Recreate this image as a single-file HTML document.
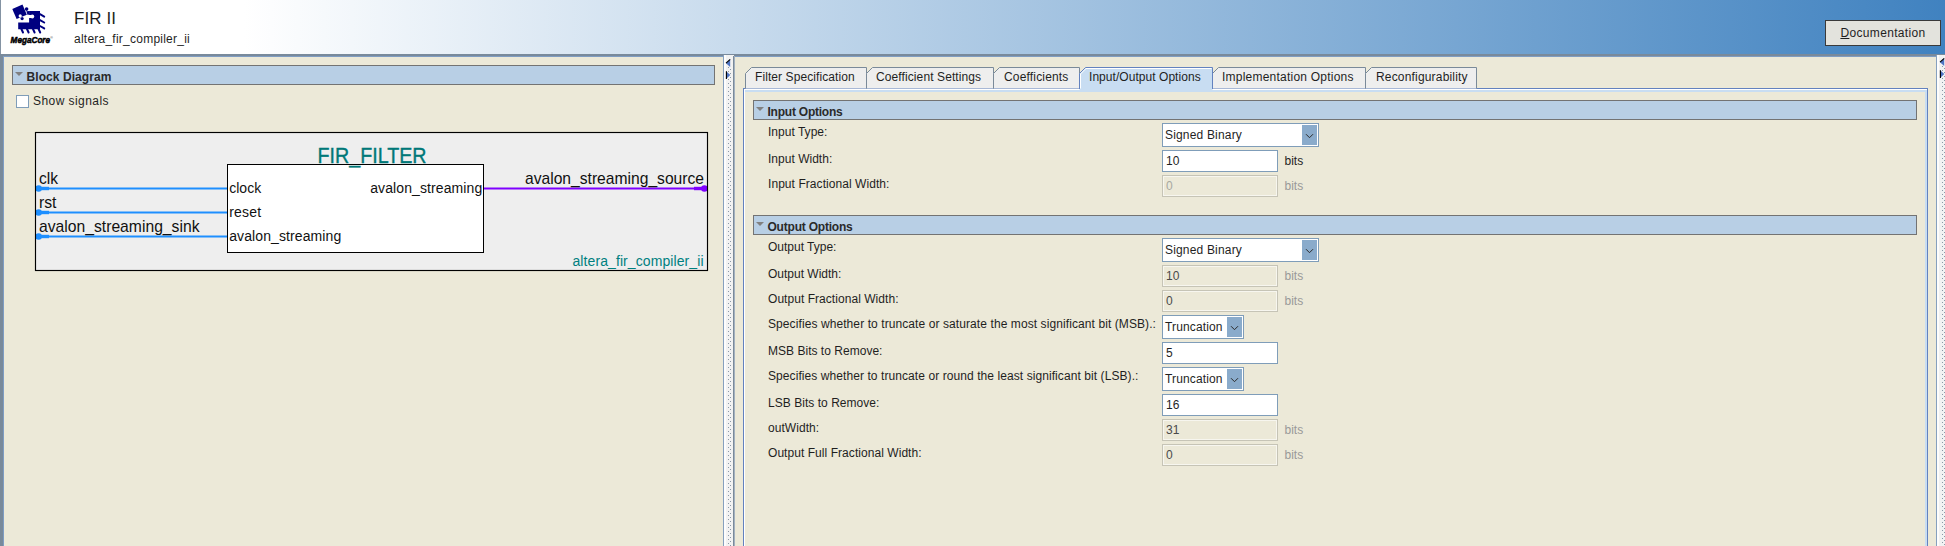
<!DOCTYPE html>
<html><head><meta charset="utf-8"><title>FIR II</title>
<style>
html,body{margin:0;padding:0;}
body{width:1945px;height:546px;overflow:hidden;position:relative;background:#ECE9D8;font-family:"Liberation Sans",sans-serif;font-size:12px;color:#1f1f1f;}
.abs{position:absolute;}
#hdr{left:0;top:0;width:1945px;height:54px;background:linear-gradient(to right,#ffffff 0px,#ffffff 244px,#4082c0 1945px);}
.t{position:absolute;white-space:nowrap;line-height:1;}
.bar{position:absolute;background:#b8cfe5;border:1px solid #737373;box-sizing:border-box;height:20px}
.bar b{position:absolute;left:13.5px;top:5px;font-size:12px;line-height:12px;white-space:nowrap;color:#2a2a2a}
.tri{position:absolute;left:1.5px;top:6px;width:0;height:0;border-left:4px solid transparent;border-right:4px solid transparent;border-top:4px solid #808080;}
.lbl{position:absolute;left:768px;white-space:nowrap;font-size:12px;line-height:14px;}
.tb{position:absolute;left:1162px;width:116px;height:22px;box-sizing:border-box;border:1px solid #7f9db9;background:#fff;font-size:12px;line-height:20px;padding-left:3px;white-space:nowrap}
.tb.dis{border-color:#c6c4b6;background:#ece9d8;color:#4a4a4a;box-shadow:inset 0 0 0 1px #f7f6ef;}
.bits{position:absolute;left:1284.5px;font-size:12px;line-height:14px;}
.bits.dis{color:#999}
.cb{position:absolute;left:1162px;height:24px;box-sizing:border-box;border:1px solid #7f9db9;background:#fff;font-size:12px;line-height:23px;padding-left:2px;white-space:nowrap}
.cb i{position:absolute;right:1px;top:1px;width:15px;height:20px;background:#8aabcb;}
.cb i svg{position:absolute;left:0;top:0}
.doc::first-letter{text-decoration:underline}
.tab{position:absolute;top:67px;height:21px;font-size:12px;line-height:20px;white-space:nowrap}
</style></head><body>
<div id="hdr" class="abs"></div>
<div class="abs" style="left:0;top:54px;width:1945px;height:3px;background:#798a9b"></div>
<div class="abs" style="left:0;top:0;width:1px;height:54px;background:#8493a3"></div>
<div class="abs" style="left:0;top:54px;width:4px;height:492px;background:#798a9b"></div>
<div class="abs" style="left:3px;top:56px;width:1px;height:490px;background:#7f9dc3"></div>
<div class="abs" style="left:3px;top:56px;width:720px;height:1px;background:#7f9dc3"></div>
<div class="abs" style="left:735px;top:56px;width:1201px;height:1px;background:#7f9dc3"></div>
<svg class="abs" style="left:0;top:0" width="64" height="52" viewBox="0 0 64 52">
 <g fill="#000080">
  <polygon points="12.3,8.9 22.5,4.6 26.8,14.8 16.6,19.1"/>
  <circle cx="26.6" cy="9.1" r="1.8"/>
  <circle cx="22.1" cy="18.6" r="1.6"/>
  <path d="M29.1 10.9 H40 V29.2 H18.2 V22.4 H29.1 Z"/>
  <polygon points="26.3,11.2 29.2,10.9 29.2,14.6 27.6,14.9"/>
  <g stroke="#000080" stroke-width="2" stroke-linecap="round">
   <line x1="40" y1="14.2" x2="44.2" y2="16.6"/><line x1="40" y1="20.1" x2="44.2" y2="22.5"/><line x1="40" y1="26" x2="44.2" y2="28.4"/>
   <line x1="21.4" y1="29" x2="23" y2="32.5"/><line x1="27" y1="29" x2="28.6" y2="32.5"/><line x1="33" y1="29" x2="34.6" y2="32.5"/><line x1="38.6" y1="29" x2="40.2" y2="32.5"/>
  </g>
 </g>
 <g fill="#fff">
  <circle cx="20.2" cy="15.9" r="1.6"/>
  <rect x="29" y="15" width="2.4" height="3"/>
  <circle cx="32.3" cy="16.5" r="1.9"/>
 </g>
 <text x="10.6" y="42.7" font-family="Liberation Sans, sans-serif" font-weight="bold" font-style="italic" font-size="9.4" fill="#000" stroke="#000" stroke-width="0.55" textLength="39.5" lengthAdjust="spacingAndGlyphs">MegaCore</text>
 <text x="50.3" y="39" font-family="Liberation Sans, sans-serif" font-size="3.6" fill="#333">®</text>
</svg>
<div class="t" style="left:74px;top:10px;font-size:17px;letter-spacing:0.074px">FIR II</div>
<div class="t" style="left:74px;top:33px;font-size:12px;letter-spacing:0.240px">altera_fir_compiler_ii</div>
<div class="abs doc" style="left:1825px;top:20px;width:116px;height:26px;box-sizing:border-box;border:1px solid #3a3a3a;background:#e3e3dd;font-size:12px;line-height:24px;text-align:center;letter-spacing:0.345px;white-space:nowrap">Documentation</div>
<div class="bar" style="left:12px;top:65px;width:703px"><span class="tri"></span><b style="letter-spacing:0.075px">Block Diagram</b></div>
<div class="abs" style="left:16px;top:95px;width:13px;height:13px;box-sizing:border-box;border:1px solid #7f9db9;background:#fff"></div>
<div class="t" style="left:33px;top:95px;font-size:12px;letter-spacing:0.441px">Show signals</div>
<svg class="abs" style="left:0;top:120px" width="723" height="160" viewBox="0 120 723 160" font-family="Liberation Sans, sans-serif">
 <rect x="35.5" y="132.5" width="672" height="138" fill="#eeeeee" stroke="none"/>
 <rect x="227.5" y="164.5" width="256" height="88" fill="#fff" stroke="#000"/>
 <line x1="36" y1="188.5" x2="227" y2="188.5" stroke="#1e8fff" stroke-width="2.2"/>
 <circle cx="38.6" cy="188.5" r="3.3" fill="#1e8fff"/><rect x="36" y="186.8" width="13" height="3.4" fill="#1e8fff"/>
 <line x1="36" y1="212.5" x2="227" y2="212.5" stroke="#1e8fff" stroke-width="2.2"/>
 <circle cx="38.6" cy="212.5" r="3.3" fill="#1e8fff"/><rect x="36" y="210.8" width="13" height="3.4" fill="#1e8fff"/>
 <line x1="36" y1="236.5" x2="227" y2="236.5" stroke="#1e8fff" stroke-width="2.2"/>
 <circle cx="38.6" cy="236.5" r="3.3" fill="#1e8fff"/><rect x="36" y="234.8" width="13" height="3.4" fill="#1e8fff"/>
 <line x1="484" y1="188.5" x2="707" y2="188.5" stroke="#7f00ff" stroke-width="2.2"/>
 <circle cx="704.4" cy="188.5" r="3.3" fill="#7f00ff"/><rect x="694" y="186.8" width="13" height="3.4" fill="#7f00ff"/>
 <rect x="35.5" y="132.5" width="672" height="138" fill="none" stroke="#000" stroke-width="1.15"/>
 <text x="317.5" y="163" font-size="21.5" fill="#007878" stroke="#007878" stroke-width="0.35" textLength="109" lengthAdjust="spacingAndGlyphs">FIR_FILTER</text>
 <g font-size="16.6" fill="#111">
  <text x="39" y="184" textLength="19" lengthAdjust="spacingAndGlyphs">clk</text>
  <text x="39" y="208" textLength="17.5" lengthAdjust="spacingAndGlyphs">rst</text>
  <text x="39" y="232" textLength="160.5" lengthAdjust="spacingAndGlyphs">avalon_streaming_sink</text>
  <text x="525" y="184" textLength="179" lengthAdjust="spacingAndGlyphs">avalon_streaming_source</text>
 </g>
 <g font-size="14" fill="#111">
  <text x="229.2" y="193" textLength="32">clock</text>
  <text x="229.2" y="217" textLength="32">reset</text>
  <text x="229.2" y="241" textLength="112">avalon_streaming</text>
  <text x="370.2" y="193" textLength="112">avalon_streaming</text>
 </g>
 <text x="572.5" y="266" font-size="14" fill="#008080" textLength="131">altera_fir_compiler_ii</text>
</svg>
<svg class="abs" style="left:723px;top:55px" width="12" height="491" viewBox="0 0 12 491"><defs><pattern id="d723" x="5" y="12" width="4" height="4" patternUnits="userSpaceOnUse"><rect x="0" y="0" width="1" height="1" fill="#8a99a8"/><rect x="2" y="2" width="1" height="1" fill="#8a99a8"/></pattern></defs><rect x="0" y="0" width="11" height="491" fill="#f2f2f2"/><rect x="0" y="0" width="1" height="491" fill="#86a0be"/><rect x="1" y="0" width="2" height="491" fill="#fdfdfd"/><rect x="10" y="1" width="1" height="491" fill="#7a8a99"/><rect x="11" y="1" width="1" height="491" fill="#a3b1c1"/><g transform="translate(0,0)"><rect x="5" y="12" width="4" height="479" fill="url(#d723)"/><polygon points="3,8.2 7.2,4.4 7.2,12" fill="#4d73c2"/><polyline points="3,8.2 7.2,4.4" stroke="#000" stroke-width="1.1" fill="none"/><polygon points="3.2,16.2 7.3,20 3.2,23.9" fill="#4d73c2"/><line x1="3.4" y1="16.2" x2="3.4" y2="23.9" stroke="#000" stroke-width="1.1"/></g></svg>
<svg class="abs" style="left:1936px;top:55px" width="9" height="491" viewBox="0 0 9 491"><defs><pattern id="d1936" x="5" y="12" width="4" height="4" patternUnits="userSpaceOnUse"><rect x="0" y="0" width="1" height="1" fill="#8a99a8"/><rect x="2" y="2" width="1" height="1" fill="#8a99a8"/></pattern></defs><rect x="0" y="0" width="11" height="491" fill="#f2f2f2"/><rect x="0" y="0" width="1" height="491" fill="#86a0be"/><rect x="1" y="0" width="2" height="491" fill="#fdfdfd"/><rect x="10" y="1" width="1" height="491" fill="#7a8a99"/><rect x="11" y="1" width="1" height="491" fill="#a3b1c1"/><g transform="translate(1,-1)"><rect x="5" y="12" width="4" height="479" fill="url(#d1936)"/><polygon points="3,8.2 7.2,4.4 7.2,12" fill="#4d73c2"/><polyline points="3,8.2 7.2,4.4" stroke="#000" stroke-width="1.1" fill="none"/><polygon points="3.2,16.2 7.3,20 3.2,23.9" fill="#4d73c2"/><line x1="3.4" y1="16.2" x2="3.4" y2="23.9" stroke="#000" stroke-width="1.1"/></g></svg>
<div class="abs" style="left:743px;top:88px;width:1185px;height:470px;box-sizing:border-box;border:1px solid #6382bf;"></div>
<div class="abs" style="left:744px;top:89px;width:1183px;height:1px;background:#fff"></div>
<div class="abs" style="left:744px;top:89px;width:1px;height:470px;background:#fff"></div>
<div class="abs" style="left:745px;top:90px;width:1182px;height:2px;background:#c8ddf2"></div>
<div class="abs" style="left:1925px;top:90px;width:2px;height:470px;background:#c8ddf2"></div>
<svg class="abs" style="left:740px;top:60px" width="745" height="34" viewBox="740 60 745 34">
 <path d="M745.5 88.5 V73.5 L751.5 67.5 H866.5 V88.5" fill="#eeeeee" stroke="#7a8a99"/>
 <path d="M866.5 88.5 V73.5 L872.5 67.5 H993.5 V88.5" fill="#eeeeee" stroke="#7a8a99"/>
 <path d="M993.5 88.5 V73.5 L999.5 67.5 H1079.5 V88.5" fill="#eeeeee" stroke="#7a8a99"/>
 <path d="M1212.5 88.5 V73.5 L1218.5 67.5 H1365.5 V88.5" fill="#eeeeee" stroke="#7a8a99"/>
 <path d="M1365.5 88.5 V73.5 L1371.5 67.5 H1476.5 V88.5" fill="#eeeeee" stroke="#7a8a99"/>
 <path d="M1079.5 92 V73.5 L1085.5 67.5 H1212.5 V92 Z" fill="#c8ddf2" stroke="none"/>
 <path d="M1080.5 88.5 V74 L1086 68.5 H1211.5" fill="none" stroke="#fff"/>
 <path d="M1079.5 89 V73.5 L1085.5 67.5 H1212.5 V89" fill="none" stroke="#6382bf"/>
</svg>
<div class="tab" style="left:755px;letter-spacing:0.083px">Filter Specification</div>
<div class="tab" style="left:876px;letter-spacing:0.101px">Coefficient Settings</div>
<div class="tab" style="left:1004px;letter-spacing:0.167px">Coefficients</div>
<div class="tab" style="left:1089px;letter-spacing:0.048px">Input/Output Options</div>
<div class="tab" style="left:1222px;letter-spacing:0.226px">Implementation Options</div>
<div class="tab" style="left:1376px;letter-spacing:0.176px">Reconfigurability</div>
<div class="bar" style="left:753px;top:100px;width:1164px"><span class="tri"></span><b style="letter-spacing:-0.229px">Input Options</b></div>
<div class="lbl" style="top:125px;letter-spacing:0.019px">Input Type:</div>
<div class="cb" style="top:123px;width:157px;letter-spacing:0.176px">Signed Binary<i><svg width="15" height="20"><polyline points="4,9.2 7.5,12.7 11,9.2" fill="none" stroke="#2b2b2b" stroke-width="1"/></svg></i></div>
<div class="lbl" style="top:152px;letter-spacing:0.019px">Input Width:</div>
<div class="tb" style="top:150px">10</div>
<div class="bits" style="top:154px">bits</div>
<div class="lbl" style="top:177px;letter-spacing:0.062px">Input Fractional Width:</div>
<div class="tb dis" style="top:175px;color:#a8a8a0">0</div>
<div class="bits dis" style="top:179px">bits</div>
<div class="bar" style="left:753px;top:215px;width:1164px"><span class="tri"></span><b style="letter-spacing:-0.213px">Output Options</b></div>
<div class="lbl" style="top:240px;letter-spacing:-0.008px">Output Type:</div>
<div class="cb" style="top:238px;width:157px;letter-spacing:0.176px">Signed Binary<i><svg width="15" height="20"><polyline points="4,9.2 7.5,12.7 11,9.2" fill="none" stroke="#2b2b2b" stroke-width="1"/></svg></i></div>
<div class="lbl" style="top:267px;letter-spacing:-0.006px">Output Width:</div>
<div class="tb dis" style="top:265px">10</div>
<div class="bits dis" style="top:269px">bits</div>
<div class="lbl" style="top:292px;letter-spacing:0.047px">Output Fractional Width:</div>
<div class="tb dis" style="top:290px">0</div>
<div class="bits dis" style="top:294px">bits</div>
<div class="lbl" style="top:317px;letter-spacing:0.088px">Specifies whether to truncate or saturate the most significant bit (MSB).:</div>
<div class="cb" style="top:315px;width:82px;letter-spacing:0.130px">Truncation<i><svg width="15" height="20"><polyline points="4,9.2 7.5,12.7 11,9.2" fill="none" stroke="#2b2b2b" stroke-width="1"/></svg></i></div>
<div class="lbl" style="top:344px;letter-spacing:0.022px">MSB Bits to Remove:</div>
<div class="tb" style="top:342px">5</div>
<div class="lbl" style="top:369px;letter-spacing:0.078px">Specifies whether to truncate or round the least significant bit (LSB).:</div>
<div class="cb" style="top:367px;width:82px;letter-spacing:0.130px">Truncation<i><svg width="15" height="20"><polyline points="4,9.2 7.5,12.7 11,9.2" fill="none" stroke="#2b2b2b" stroke-width="1"/></svg></i></div>
<div class="lbl" style="top:396px;letter-spacing:0.038px">LSB Bits to Remove:</div>
<div class="tb" style="top:394px">16</div>
<div class="lbl" style="top:421px;letter-spacing:0.057px">outWidth:</div>
<div class="tb dis" style="top:419px">31</div>
<div class="bits dis" style="top:423px">bits</div>
<div class="lbl" style="top:446px;letter-spacing:0.054px">Output Full Fractional Width:</div>
<div class="tb dis" style="top:444px">0</div>
<div class="bits dis" style="top:448px">bits</div>
</body></html>
